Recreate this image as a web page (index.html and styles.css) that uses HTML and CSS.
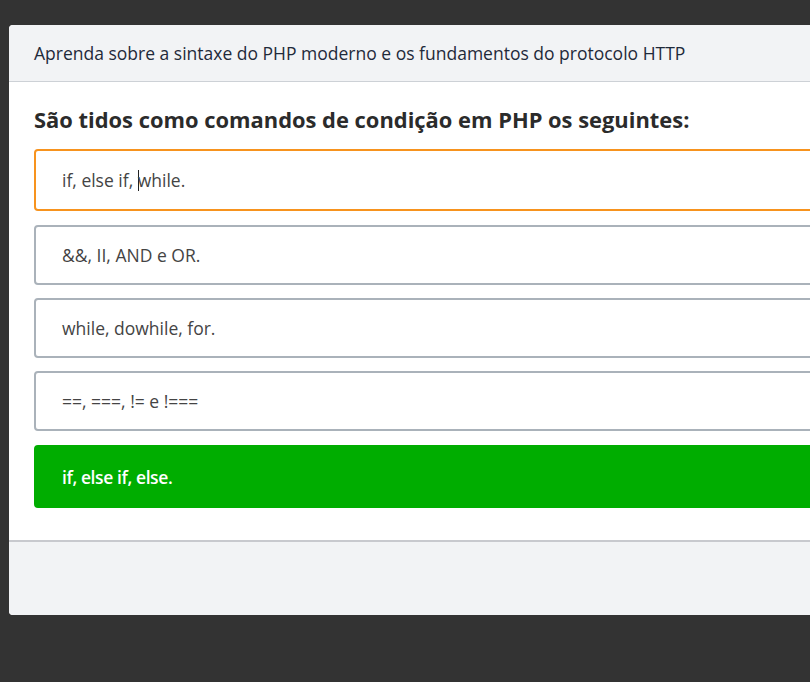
FILE: index.html
```html
<!DOCTYPE html>
<html lang="pt">
<head>
<meta charset="utf-8">
<title>Quiz PHP</title>
<link rel="stylesheet" href="styles.css">
</head>
<body>
<div class="modal">
  <div class="modal-header">Aprenda sobre a sintaxe do PHP moderno e os fundamentos do protocolo HTTP</div>
  <div class="modal-body">
    <h2 class="question">São tidos como comandos de condição em PHP os seguintes:</h2>
    <div class="options">
      <div class="option option-focus">if, else if, <span class="caret"></span>while.</div>
      <div class="option">&amp;&amp;, II, AND e OR.</div>
      <div class="option">while, dowhile, for.</div>
      <div class="option">==, ===, != e !===</div>
      <div class="option option-correct">if, else if, else.</div>
    </div>
  </div>
  <div class="modal-footer"></div>
</div>
</body>
</html>
```
FILE: styles.css
```css
html, body {
  margin: 0;
  padding: 0;
  background: #333333;
  overflow: hidden;
  height: 100%;
}
body {
  font-family: "Open Sans", "Noto Sans", sans-serif;
}
.modal {
  margin: 25px 0 0 9px;
  width: 840px;
  background: #ffffff;
  border-radius: 4px;
  overflow: hidden;
}
.modal-header {
  background: #f2f3f5;
  border-bottom: 1px solid #cdd1d6;
  padding: 0 25px;
  height: 56px;
  display: flex;
  align-items: center;
  font-size: 17.5px;
  color: #1f2a3a;
}
.modal-body {
  padding: 24px 25px 32px;
}
.question {
  margin: 0 0 15px;
  font-size: 21.9px;
  line-height: 28px;
  font-weight: 700;
  color: #2b2b2b;
}
.options {
  display: flex;
  flex-direction: column;
  gap: 13px;
}
.option {
  box-sizing: border-box;
  height: 60px;
  border: 2px solid #aab2ba;
  border-radius: 4px;
  padding: 0 26px;
  display: flex;
  align-items: center;
  font-size: 17.5px;
  color: #444444;
  white-space: pre;
}
.option-focus {
  height: 62px;
  border-color: #f7931e;
  margin-bottom: 1px;
}
.caret {
  display: inline-block;
  width: 0;
  height: 21px;
  border-left: 1px solid #222;
  margin-right: -1px;
}
.option-correct {
  height: 63px;
  margin-top: 1px;
  background: #00ad00;
  border-color: #00ad00;
  color: #ffffff;
  font-weight: 600;
  letter-spacing: -0.4px;
}
.modal-footer {
  border-top: 2px solid #c8c9ce;
  background: #f2f3f5;
  height: 73px;
}
```
